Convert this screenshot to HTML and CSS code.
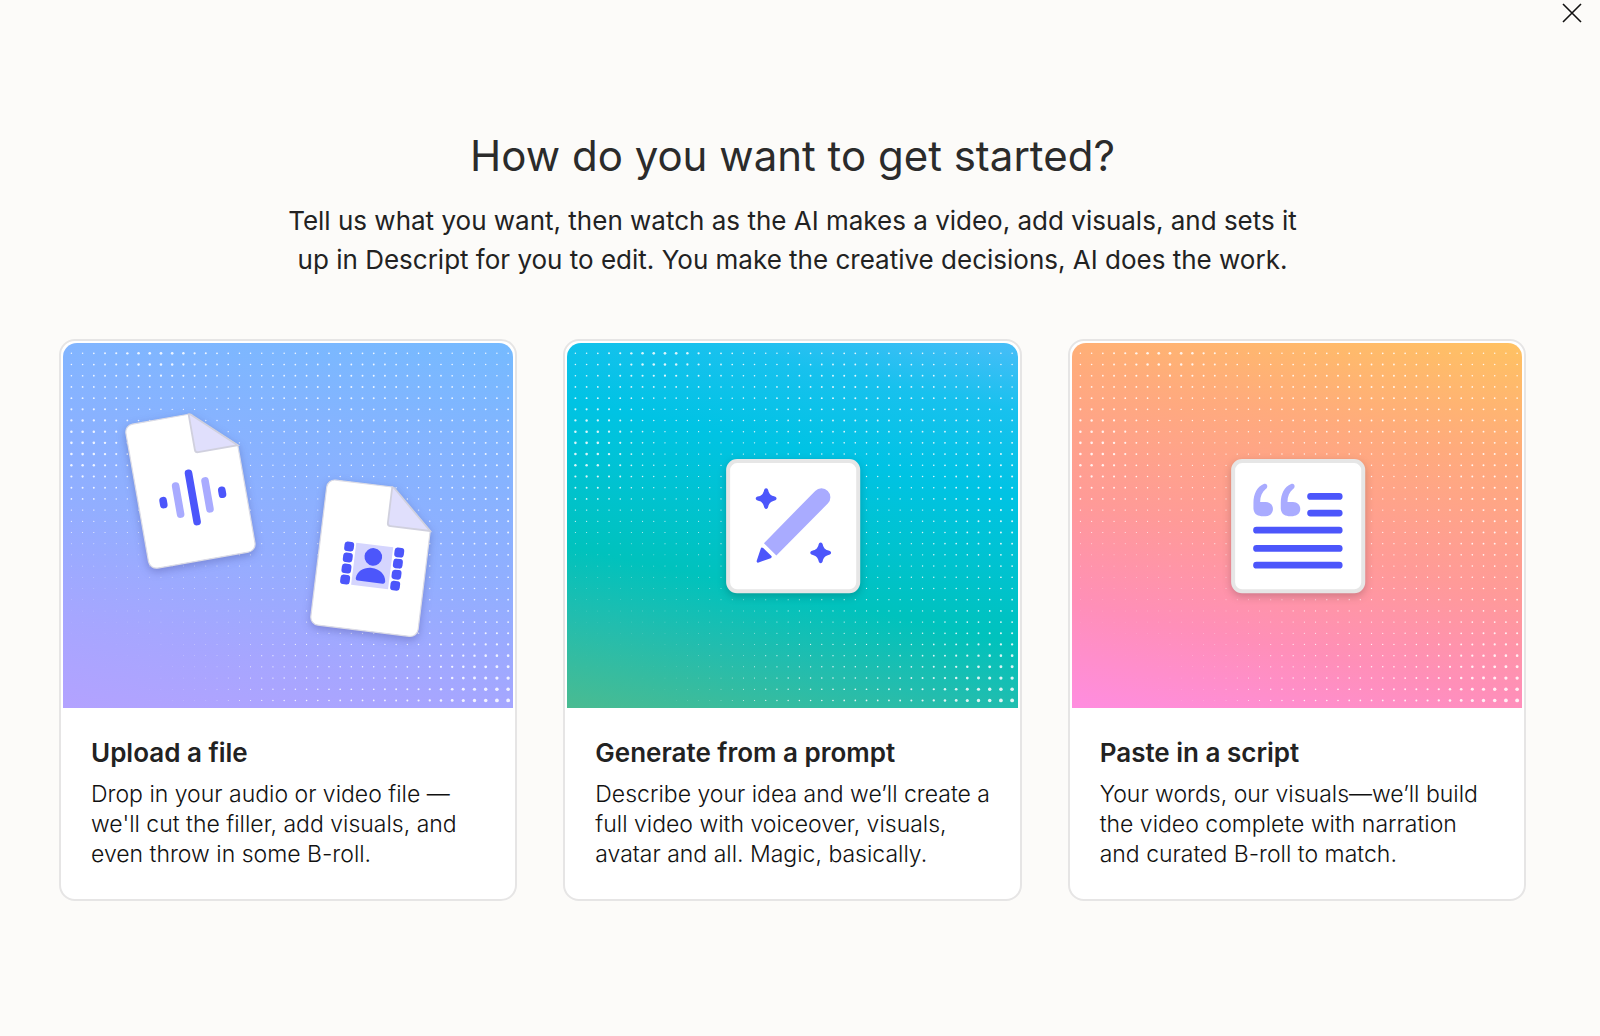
FILE: index.html
```html
<!DOCTYPE html>
<html lang="en">
<head>
  <meta charset="UTF-8">
  <meta name="viewport" content="width=device-width, initial-scale=1.0">
  <title>Get started</title>
  <link rel="stylesheet" href="styles.css">
</head>
<body>
  <!-- shared shapes -->
  <svg class="defs" aria-hidden="true">
    <defs>
      <g id="dots" fill="#fff"></g>
      <g id="page">
        <path class="paper" d="M8 0 H65 L108 39 V138 a8 8 0 0 1 -8 8 H8 a8 8 0 0 1 -8 -8 V8 a8 8 0 0 1 8 -8 Z"/>
        <path class="fold" d="M65 0 V36 a3 3 0 0 0 3 3 H108 L69 2.5 Q67 0 65 0 Z"/>
      </g>
      <path id="star" d="M0 -10.4 C1.2 -10.4 1.7 -9.5 2 -8.5 C3 -4.5 4.5 -3 8.5 -2 C9.5 -1.7 10.4 -1.2 10.4 0 C10.4 1.2 9.5 1.7 8.5 2 C4.5 3 3 4.5 2 8.5 C1.7 9.5 1.2 10.4 0 10.4 C-1.2 10.4 -1.7 9.5 -2 8.5 C-3 4.5 -4.5 3 -8.5 2 C-9.5 1.7 -10.4 1.2 -10.4 0 C-10.4 -1.2 -9.5 -1.7 -8.5 -2 C-4.5 -3 -3 -4.5 -2 -8.5 C-1.7 -9.5 -1.2 -10.4 0 -10.4 Z"/>
      <path id="quote" d="M32.6 25 C26 27.5 22.3 35 22.3 44 V49 C22.3 54 25.6 57 30 57 H34.5 C38.8 57 41.8 54 41.8 50 C41.8 46 38.8 43 34.5 43 H29 C29 37.5 31 33 34.6 30 C37.5 27.5 36 23.8 32.6 25 Z"/>
    </defs>
  </svg>

  <header class="topbar">
    <button class="close" type="button" aria-label="Close">
      <svg width="20" height="20" viewBox="0 0 20 20"><path d="M1 1 L19 19 M19 1 L1 19"/></svg>
    </button>
  </header>

  <main>
    <section class="intro">
      <h1>How do you want to get started?</h1>
      <p>Tell us what you want, then watch as the AI makes a video, add visuals, and sets it up in Descript for you to edit. You make the creative decisions, AI does the work.</p>
    </section>

    <div class="cards">
      <button class="card" type="button">
        <svg class="art art-upload" viewBox="0 0 450 365" aria-hidden="true">
          <use href="#dots"/>
          <g class="shadow">
            <g transform="translate(61.5 82.5) rotate(-10)">
              <use href="#page"/>
              <g transform="translate(54.7 82.6)">
                <rect class="ink" x="-33.6" y="-5.8" width="7.6" height="11.6" rx="3.8"/>
                <rect class="tint" x="-18.7" y="-18" width="7.6" height="36" rx="3.8"/>
                <rect class="ink" x="-3.8" y="-28.3" width="7.6" height="56.6" rx="3.8"/>
                <rect class="tint" x="11.1" y="-18" width="7.6" height="36" rx="3.8"/>
                <rect class="ink" x="26" y="-5.8" width="7.6" height="11.6" rx="3.8"/>
              </g>
            </g>
          </g>
          <g class="shadow">
            <g transform="translate(264.5 136) rotate(7)">
              <use href="#page"/>
              <g transform="translate(54.7 80.8)">
                <rect class="frame" x="-18.6" y="-21.2" width="37.2" height="42.4"/>
                <g class="ink">
                  <rect x="-30" y="-21.4" width="9.6" height="9.6" rx="3"/>
                  <rect x="-30" y="-10.3" width="9.6" height="9.6" rx="3"/>
                  <rect x="-30" y="0.8" width="9.6" height="9.6" rx="3"/>
                  <rect x="-30" y="11.9" width="9.6" height="9.6" rx="3"/>
                  <rect x="20.4" y="-21.4" width="9.6" height="9.6" rx="3"/>
                  <rect x="20.4" y="-10.3" width="9.6" height="9.6" rx="3"/>
                  <rect x="20.4" y="0.8" width="9.6" height="9.6" rx="3"/>
                  <rect x="20.4" y="11.9" width="9.6" height="9.6" rx="3"/>
                  <circle cx="0" cy="-9.2" r="8.8"/>
                  <path d="M-14.8 13.6 C-14 6.5 -7.5 2 0 2 C7.5 2 14 6.5 14.8 13.6 C14.9 15.2 14 16.2 12.6 16.2 H-12.6 C-14 16.2 -14.9 15.2 -14.8 13.6 Z"/>
                </g>
              </g>
            </g>
          </g>
        </svg>
        <span class="text">
          <span class="title">Upload a file</span>
          <span class="desc">Drop in your audio or video file — we'll cut the filler, add visuals, and even throw in some B-roll.</span>
        </span>
      </button>

      <button class="card" type="button">
        <svg class="art art-prompt" viewBox="0 0 450 365" aria-hidden="true">
          <use href="#dots"/>
          <g transform="translate(159 116)">
            <rect class="tile" x="2" y="2" width="130" height="130" rx="9"/>
            <path class="tint" d="M37.8 84 L89 31.8 A8.9 8.9 0 0 1 101.6 44.4 L50.2 96.4 Z"/>
            <path class="ink nib" d="M36 90 L44 97.6 L32 102 Z"/>
            <use class="ink" href="#star" x="40" y="39.5"/>
            <use class="ink" href="#star" x="94.5" y="93.7"/>
          </g>
        </svg>
        <span class="text">
          <span class="title">Generate from a prompt</span>
          <span class="desc">Describe your idea and we’ll create a full video with voiceover, visuals, avatar and all. Magic, basically.</span>
        </span>
      </button>

      <button class="card" type="button">
        <svg class="art art-script" viewBox="0 0 450 365" aria-hidden="true">
          <use href="#dots"/>
          <g transform="translate(159 116)">
            <rect class="tile" x="2" y="2" width="130" height="130" rx="9"/>
            <use class="tint" href="#quote"/>
            <use class="tint" href="#quote" x="27.3"/>
            <path class="lines" d="M79.4 37.3 H108 M79.4 54 H108 M25.4 71 H108 M25.4 89.3 H108 M25.4 106 H108"/>
          </g>
        </svg>
        <span class="text">
          <span class="title">Paste in a script</span>
          <span class="desc">Your words, our visuals—we’ll build the video complete with narration and curated B-roll to match.</span>
        </span>
      </button>
    </div>
  </main>

  <script src="dots.js"></script>
</body>
</html>
```
FILE: styles.css
```css
* {
  box-sizing: border-box;
}
body {
  margin: 0;
  background: #fcfbf9;
  color: #222;
  font-family: Inter, "Liberation Sans", sans-serif;
}
.defs {
  position: absolute;
  width: 0;
  height: 0;
}

.topbar {
  display: flex;
  justify-content: flex-end;
  padding: 3px 18px;
}
.close {
  display: flex;
  padding: 0;
  border: 0;
  background: none;
  cursor: pointer;
}
.close path {
  stroke: #111;
  stroke-width: 1.6;
}

main {
  padding: 102px 74px 60px 59px;
}
.intro {
  text-align: center;
}
.intro h1 {
  margin: 0;
  font-size: 42px;
  line-height: 56px;
  font-weight: 400;
  color: #2b2b2b;
}
.intro p {
  max-width: 1024px;
  margin: 17px auto 0;
  font-size: 26px;
  line-height: 39px;
}

.cards {
  display: grid;
  grid-template-columns: repeat(3, 1fr);
  gap: 46px;
  margin-top: 60px;
}
.card {
  display: flex;
  flex-direction: column;
  padding: 2px;
  border: 2px solid #e6e5e5;
  border-radius: 16px;
  background: #fff;
  color: inherit;
  font-family: inherit;
  text-align: left;
  cursor: pointer;
}
.art {
  display: block;
  width: 100%;
  border-radius: 14px 14px 0 0;
}
.art-upload {
  background: linear-gradient(192deg, #75baff, #84b4ff 25%, #92aeff 55%, #a6a6ff 80%, #b3a2ff);
}
.art-prompt {
  background: linear-gradient(192deg, #48bdf8, #18c1ee 15%, #00c3e4 33%, #00c2bd 65%, #22bdae 80%, #4abb91);
}
.art-script {
  background: linear-gradient(192deg, #ffc262, #ffab7c 26%, #ff9a98 55%, #ff8fb8 77%, #ff8de0);
}

.text {
  display: block;
  padding: 29px 26px 28px 28px;
}
.title {
  display: block;
  font-size: 26px;
  line-height: 32px;
  font-weight: 600;
}
.desc {
  display: block;
  margin-top: 10px;
  font-size: 23px;
  line-height: 30px;
  font-weight: 300;
  color: #111;
}

/* illustrations */
.ink {
  fill: #4c56fb;
}
.tint {
  fill: #a9abff;
}
.frame {
  fill: #d5d5fe;
}
.nib {
  stroke: #4c56fb;
  stroke-width: 3;
  stroke-linejoin: round;
}
.lines {
  stroke: #4c56fb;
  stroke-width: 6.8;
  stroke-linecap: round;
}
.paper {
  fill: #fff;
  stroke: #dcdce6;
  stroke-width: 1.2;
}
.fold {
  fill: #e0dffc;
  stroke: #d0d0de;
  stroke-width: 1.8;
}
.tile {
  fill: #fff;
  stroke: #e6e6e6;
  stroke-width: 4;
  filter: drop-shadow(0 3px 4px rgba(0, 0, 0, 0.2));
}
.shadow {
  filter: drop-shadow(0 3px 4px rgba(40, 40, 110, 0.28));
}
```
FILE: dots.js
```js
// halftone grid: every spot is [x, y, spreadX, spreadY, radius]
const spots = [
  [95, 8, 55, 35, 0.7],
  [20, 105, 50, 55, 0.7],
  [290, 50, 110, 60, 0.35],
  [440, 150, 70, 90, 0.4],
  [450, 370, 85, 70, 1.3],
  [250, 350, 90, 40, 0.3]
];
const step = 11.19;
let circles = "";

for (let row = 0; row < 32; row++) {
  for (let col = 0; col < 40; col++) {
    const x = 8.4 + col * step;
    const y = 10.3 + row * step;
    // fades out towards the bottom left corner
    let r = 0.65 * (1 - Math.exp(-((x / 200) ** 2 + ((y - 365) / 150) ** 2)));
    for (const [sx, sy, dx, dy, size] of spots) {
      r += size * Math.exp(-(((x - sx) / dx) ** 2 + ((y - sy) / dy) ** 2));
    }
    circles += `<circle cx="${x.toFixed(1)}" cy="${y.toFixed(1)}" r="${r.toFixed(2)}" opacity="0.85"/>`;
  }
}

document.getElementById("dots").innerHTML = circles;
```
